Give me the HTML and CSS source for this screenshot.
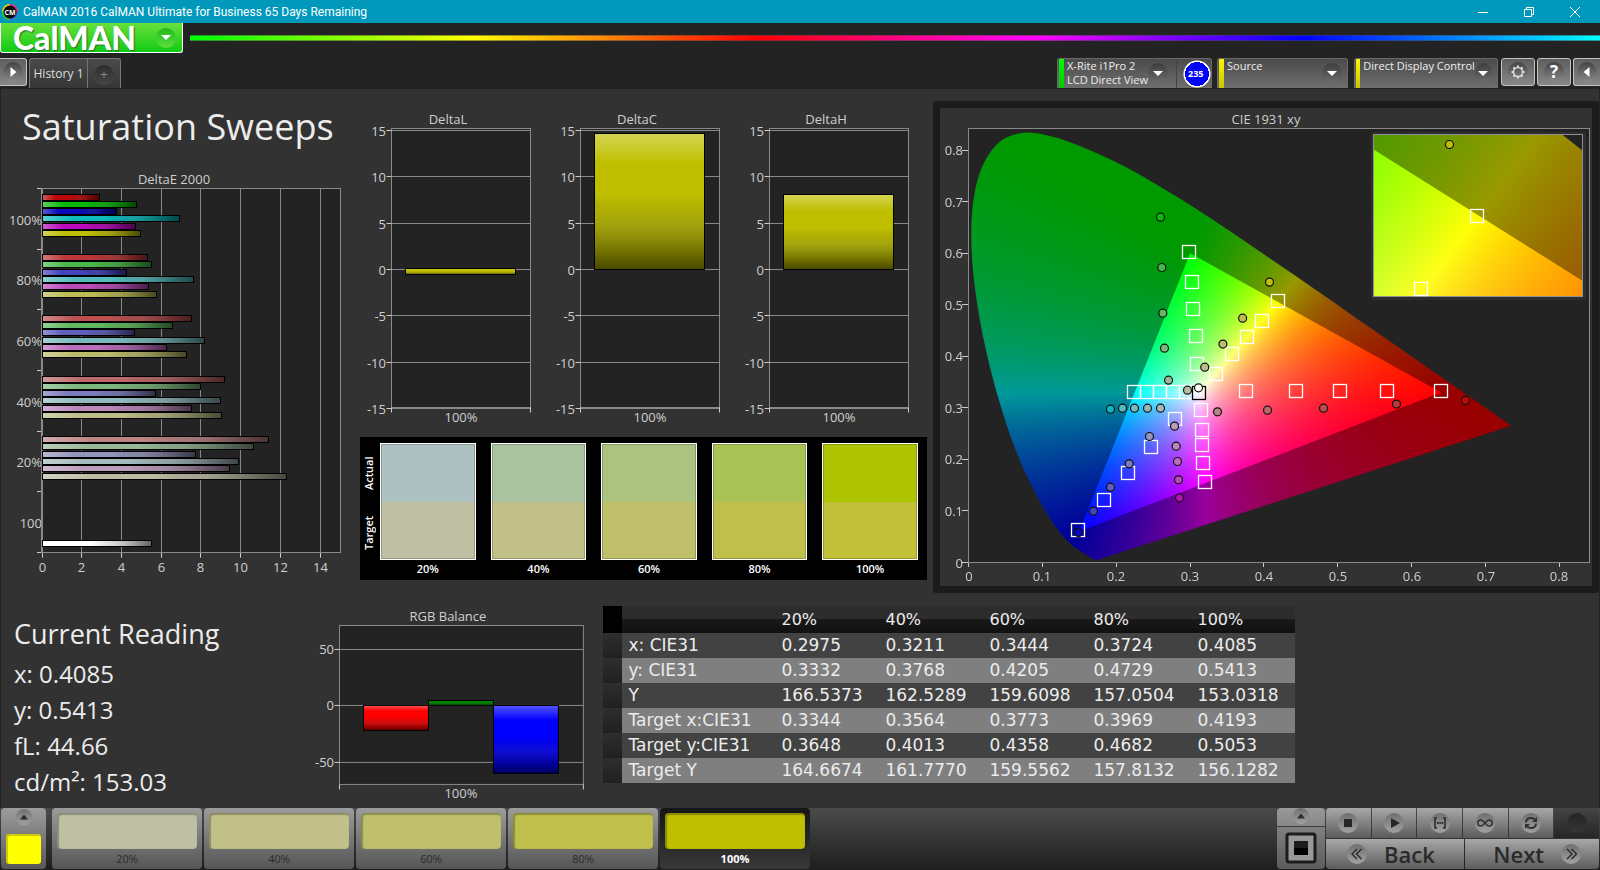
FILE: index.html
```html
<!DOCTYPE html>
<html lang="en">
<head>
<meta charset="utf-8">
<title>CalMAN 2016</title>
<link rel="stylesheet" href="styles.css">
</head>
<body>
<header class="titlebar">
  <svg class="app-icon" viewBox="0 0 16 16" aria-hidden="true">
    <circle cx="8" cy="8" r="8" fill="#e8d018"/>
    <path d="M8 0a8 8 0 0 1 8 8H8z" fill="#e0208c"/><path d="M16 8a8 8 0 0 1-8 8V8z" fill="#2a5cf0"/><path d="M8 16a8 8 0 0 1-8-8h8z" fill="#18c040"/>
    <circle cx="8" cy="8" r="6.500" fill="#0a0a0a"/>
    <text x="8" y="10.500" text-anchor="middle" class="app-icon-text">CM</text>
  </svg>
  <span class="window-title">CalMAN 2016 CalMAN Ultimate for Business 65 Days Remaining</span>
  <div class="window-controls">
    <button class="win-btn" aria-label="Minimize"><svg viewBox="0 0 12 12"><path d="M1 6.500h10"/></svg></button>
    <button class="win-btn" aria-label="Restore"><svg viewBox="0 0 12 12"><path d="M1.500 3.500h7v7h-7zM3.500 3.500v-2h7v7h-2"/></svg></button>
    <button class="win-btn" aria-label="Close"><svg viewBox="0 0 12 12"><path d="M1 1l10 10M11 1L1 11"/></svg></button>
  </div>
</header>

<div class="brand-row">
  <button class="logo"><span>CalMAN</span><i class="logo-arrow"><svg viewBox="0 0 10 6"><path d="M0 0h10L5 5z" fill="#fff"/></svg></i></button>
  <div class="rainbow"></div>
</div>

<div class="toolbar">
  <button class="tool-btn tool-btn-left" aria-label="Expand"><i class="dimple"><svg viewBox="0 0 20 20"><path d="M7.500 5l6 5-6 5z" fill="#fff"/></svg></i></button>
  <nav class="tabs"><button class="tab">History 1</button><button class="tab tab-add" aria-label="Add tab"><i>+</i></button></nav>
  <div class="devices">
    <button class="device device-meter"><b class="strip strip-green"></b><span class="device-name">X-Rite i1Pro 2<br>LCD Direct View</span><i class="drop"><svg viewBox="0 0 10 6"><path d="M0 0h10L5 5z" fill="#fff"/></svg></i><em class="level">235</em></button>
    <button class="device device-source"><b class="strip"></b><span class="device-name">Source</span><i class="drop"><svg viewBox="0 0 10 6"><path d="M0 0h10L5 5z" fill="#fff"/></svg></i></button>
    <button class="device device-display"><b class="strip"></b><span class="device-name">Direct Display Control</span><i class="drop"><svg viewBox="0 0 10 6"><path d="M0 0h10L5 5z" fill="#fff"/></svg></i></button>
    <div class="tool-group">
      <button class="tool-btn" aria-label="Settings"><i class="dimple"><svg viewBox="0 0 20 20"><circle cx="10" cy="10" r="4.500" fill="none" stroke="#ddd" stroke-width="1.500"/><path d="M10 3.500v2M10 14.500v2M3.500 10h2M14.500 10h2M5.400 5.400l1.400 1.400M13.200 13.200l1.400 1.400M5.400 14.600l1.400-1.400M13.200 6.800l1.400-1.400" stroke="#ddd" stroke-width="2"/></svg></i></button>
      <button class="tool-btn" aria-label="Help"><i class="dimple help">?</i></button>
      <button class="tool-btn tool-btn-right" aria-label="Collapse"><i class="dimple"><svg viewBox="0 0 20 20"><path d="M12.500 5l-6 5 6 5z" fill="#fff"/></svg></i></button>
    </div>
  </div>
</div>

<main class="workspace">
  <div class="top-row">
    <section class="col-left">
      <h1>Saturation Sweeps</h1>
      <svg id="delta-e" class="chart" viewBox="0 0 351 420" role="img" aria-label="DeltaE 2000"></svg>
    </section>
    <section class="col-mid">
      <div class="delta-row">
        <svg id="delta-l" class="chart" viewBox="0 0 189 322" role="img" aria-label="DeltaL"></svg>
        <svg id="delta-c" class="chart" viewBox="0 0 189 322" role="img" aria-label="DeltaC"></svg>
        <svg id="delta-h" class="chart" viewBox="0 0 189 322" role="img" aria-label="DeltaH"></svg>
      </div>
      <div class="compare">
        <div class="compare-labels"><span>Actual</span><span>Target</span></div>
        <figure><div class="pair pair-20"></div><figcaption>20%</figcaption></figure>
        <figure><div class="pair pair-40"></div><figcaption>40%</figcaption></figure>
        <figure><div class="pair pair-60"></div><figcaption>60%</figcaption></figure>
        <figure><div class="pair pair-80"></div><figcaption>80%</figcaption></figure>
        <figure><div class="pair pair-100"></div><figcaption>100%</figcaption></figure>
      </div>
    </section>
    <section class="cie">
      <svg id="cie" class="chart" viewBox="0 0 652 478" role="img" aria-label="CIE 1931 xy"></svg>
    </section>
  </div>

  <div class="bottom-row">
    <section class="reading">
      <h2>Current Reading</h2>
      <p>x: 0.4085</p><p>y: 0.5413</p><p>fL: 44.66</p><p>cd/m²: 153.03</p>
    </section>
    <section class="balance"><svg id="rgb" class="chart" viewBox="0 0 270 196" role="img" aria-label="RGB Balance"></svg></section>
    <table class="data">
      <thead><tr><td class="grip"></td><td></td><th>20%</th><th>40%</th><th>60%</th><th>80%</th><th>100%</th></tr></thead>
      <tbody>
        <tr><td class="grip"></td><th>x: CIE31</th><td>0.2975</td><td>0.3211</td><td>0.3444</td><td>0.3724</td><td>0.4085</td></tr>
        <tr><td class="grip"></td><th>y: CIE31</th><td>0.3332</td><td>0.3768</td><td>0.4205</td><td>0.4729</td><td>0.5413</td></tr>
        <tr><td class="grip"></td><th>Y</th><td>166.5373</td><td>162.5289</td><td>159.6098</td><td>157.0504</td><td>153.0318</td></tr>
        <tr><td class="grip"></td><th>Target x:CIE31</th><td>0.3344</td><td>0.3564</td><td>0.3773</td><td>0.3969</td><td>0.4193</td></tr>
        <tr><td class="grip"></td><th>Target y:CIE31</th><td>0.3648</td><td>0.4013</td><td>0.4358</td><td>0.4682</td><td>0.5053</td></tr>
        <tr><td class="grip"></td><th>Target Y</th><td>164.6674</td><td>161.7770</td><td>159.5562</td><td>157.8132</td><td>156.1282</td></tr>
      </tbody>
    </table>
  </div>
</main>

<footer class="dock">
  <button class="current" aria-label="Current pattern"><i class="knob knob-small"><svg viewBox="0 0 16 16"><path d="M4 10.500h8L8 5.500z" fill="#2c2c2c"/></svg></i><b></b></button>
  <div class="patterns">
    <button class="pattern"><i class="c20"></i><span>20%</span></button>
    <button class="pattern"><i class="c40"></i><span>40%</span></button>
    <button class="pattern"><i class="c60"></i><span>60%</span></button>
    <button class="pattern"><i class="c80"></i><span>80%</span></button>
    <button class="pattern pattern-active"><i class="c100"></i><span>100%</span></button>
  </div>
  <div class="window-pick">
    <button class="pick-up" aria-label="Choose pattern window"><i class="knob knob-small"><svg viewBox="0 0 16 16"><path d="M4 10.500h8L8 5.500z" fill="#2c2c2c"/></svg></i></button>
    <button class="pick-box" aria-label="Pattern window"><svg viewBox="0 0 32 32"><rect x="2" y="2" width="28" height="28" rx="2" fill="#999" stroke="#1c1c1c" stroke-width="3"/><rect x="9" y="9" width="14" height="7" fill="#1d1d1d"/><rect x="9" y="16" width="14" height="7" fill="#000"/></svg></button>
  </div>
  <div class="transport">
    <div class="transport-row">
      <button aria-label="Stop"><i class="knob"><svg viewBox="0 0 20 20"><path d="M6 6h8v8H6z" fill="#262626"/></svg></i></button>
      <button aria-label="Play"><i class="knob"><svg viewBox="0 0 20 20"><path d="M7 5l9 5-9 5z" fill="#262626"/></svg></i></button>
      <button aria-label="Step"><i class="knob"><svg viewBox="0 0 20 20"><path d="M7 5H5v10h2M13 5h2v10h-2" fill="none" stroke="#262626" stroke-width="1.500"/><path d="M7 10h1.500M9.300 10h1.500M11.600 10h1.500" stroke="#262626" stroke-width="1.800"/></svg></i></button>
      <button aria-label="Continuous"><i class="knob"><svg viewBox="0 0 20 20"><path d="M10 10C8 7.500 7 7 5.800 7a3 3 0 0 0 0 6C7 13 8 12.500 10 10s3-3 4.200-3a3 3 0 0 1 0 6C13 13 12 12.500 10 10z" fill="none" stroke="#303030" stroke-width="1.500"/></svg></i></button>
      <button aria-label="Refresh"><i class="knob"><svg viewBox="0 0 20 20"><path d="M5 9.500C5 6.500 7.500 5 10 5c2 0 3 .6 4 1.700M15 10.500c0 3-2.500 4.500-5 4.500-2 0-3-.6-4-1.700" fill="none" stroke="#303030" stroke-width="2"/><path d="M16 4v5h-5zM4 16v-5h5z" fill="#303030"/></svg></i></button>
      <button class="off" aria-label="Record" disabled><i class="knob"></i></button>
    </div>
    <div class="transport-row">
      <button class="step"><i class="knob"><svg viewBox="0 0 20 20"><path d="M10 5l-5 5 5 5M14.500 5l-5 5 5 5" fill="none" stroke="#2a2a2a" stroke-width="1.400"/></svg></i><span>Back</span></button>
      <button class="step step-next"><span>Next</span><i class="knob"><svg viewBox="0 0 20 20"><path d="M6 5l5 5-5 5M10.500 5l5 5-5 5" fill="none" stroke="#2a2a2a" stroke-width="1.400"/></svg></i></button>
    </div>
  </div>
</footer>
<script src="charts.js"></script>
</body>
</html>
```
FILE: styles.css
```css
* { box-sizing: border-box; }
body {
  margin: 0;
  min-height: 100vh;
  display: flex;
  flex-direction: column;
  background: #232323;
  color: #ececec;
  font-family: "Open Sans", "Noto Sans", sans-serif;
}
button { font: inherit; color: inherit; border: 0; padding: 0; margin: 0; background: none; text-align: left; }
i, em { font-style: normal; }
svg { display: block; }

.titlebar { display: flex; align-items: center; height: 23px; padding-left: 2px; background: #0099bc; }
.app-icon { width: 16px; height: 16px; }
.app-icon-text { font: bold 7px "Open Sans", sans-serif; fill: #fff; }
.window-title { margin-left: 5px; font-family: Roboto, sans-serif; font-size: 12px; color: #fff; flex: 1; }
.window-controls { display: flex; padding-right: 2px; }
.win-btn { width: 46px; height: 23px; display: flex; align-items: center; justify-content: center; }
.win-btn svg { width: 12px; height: 12px; fill: none; stroke: #fff; stroke-width: 1; }

.brand-row { display: flex; align-items: flex-start; gap: 7px; height: 35px; }
.logo {
  display: flex; align-items: center; justify-content: space-between;
  width: 183px; height: 30px; padding: 0 6px 0 12px;
  border: 1px solid #fff; border-top: 0; border-radius: 0 0 3px 3px;
  background: linear-gradient(#67e03c, #12cb12);
  font: 900 32px/28px Lato, sans-serif; color: #fff; text-shadow: 1px 1px 1px #2c6a2c;
}
.logo-arrow { width: 20px; height: 20px; border-radius: 50%; background: linear-gradient(#22b81c, #5ce040); display: flex; align-items: center; justify-content: center; }
.logo-arrow svg { width: 10px; height: 6px; }
.rainbow {
  flex: 1; height: 6px; margin-top: 12px;
  border-top: 1px solid #4448; border-bottom: 1px solid #4448;
  background: linear-gradient(90deg, #0f0, #ff0 20%, #f00 40%, #f0f 60%, #00f 79%, #0ff);
}

.toolbar { display: flex; height: 31px; align-items: flex-start; }
.tool-btn {
  width: 34px; height: 28px; border: 1px solid #c4c4c4; border-radius: 3px;
  background: linear-gradient(#5e5e5e, #878787);
  display: flex; align-items: center; justify-content: center;
}
.tool-btn-left { width: 27px; border-left: 0; border-radius: 0 3px 3px 0; }
.tool-btn-right { width: 27px; border-right: 0; border-radius: 3px 0 0 3px; }
.dimple { width: 20px; height: 20px; border-radius: 50%; background: linear-gradient(#444, #8a8a8a); display: flex; align-items: center; justify-content: center; }
.dimple svg { width: 20px; height: 20px; }
.help { font: bold 17px/20px "Open Sans", sans-serif; color: #fff; }
.tabs { display: flex; margin-left: 2px; border: 1px solid #777; border-bottom: 0; border-radius: 3px 3px 0 0; background: linear-gradient(#4a4a4a, #363636); height: 30px; }
.tab { width: 57px; text-align: center; font-size: 12px; color: #ddd; }
.tab-add { width: 33px; border-left: 1px solid #777; color: #8a8a8a; display: flex; align-items: center; justify-content: center; }
.tab-add i { width: 20px; height: 20px; line-height: 19px; border-radius: 50%; background: linear-gradient(#2d2d2d, #484848); font-size: 13px; margin-top: 3px; }
.devices { display: flex; gap: 5px; margin-left: auto; }
.device {
  display: flex; height: 30px; padding-left: 1px; overflow: hidden;
  border: 1px solid #6a6a6a; border-bottom: 0; border-radius: 3px 3px 0 0;
  background: linear-gradient(#4b4b4b, #6e6e6e); color: #eee;
}
.device-meter { width: 155px; }
.device-source { width: 131px; }
.device-display { width: 144px; margin-left: 1px; }
.strip { width: 5px; background: linear-gradient(#fff600, #c8c400); }
.strip-green { background: linear-gradient(#0f0, #00c800); }
.device-name { flex: 1; padding-left: 3px; font-size: 11px; line-height: 14px; white-space: nowrap; }
.drop { width: 20px; height: 20px; margin: 4px 5px 0 0; border-radius: 50%; background: linear-gradient(#3e3e3e, #6c6c6c); display: flex; align-items: center; justify-content: center; }
.drop svg { width: 10px; height: 6px; margin-top: 2px; }
.device-meter .drop { margin-right: 8px; }
.level {
  width: 35px; margin-top: 1px; padding-left: 11px; border-left: 1px solid #444; color: #fff;
  background: radial-gradient(circle at 20px 14px, #00f 12px, #fff 12px, #fff 13px, transparent 14px);
  font: bold 9px/27px "Open Sans", sans-serif;
}
.tool-group { display: flex; gap: 2px; margin-left: -2px; }

.workspace { flex: 1; margin: 0 1px; background: #323232; padding-top: 12px; }
.top-row { display: grid; grid-template-columns: minmax(0, 351fr) minmax(0, 569fr) minmax(0, 666fr); align-items: start; gap: 6px; }
.col-mid { padding-top: 7px; }
.cie { border: 7px solid #1b1b1b; border-radius: 3px; }
h1 { margin: 0; padding: 0 0 0 21px; font-size: 36px; font-weight: 400; line-height: 52px; height: 66px; white-space: nowrap; }
.chart { width: 100%; height: auto; overflow: visible; }
.chart text { font-family: "Open Sans", "Noto Sans", sans-serif; font-size: 13px; fill: #cfcfcf; }
.delta-row { display: flex; padding-right: 8px; margin-left: -6px; }
.delta-row .chart { flex: 1; min-width: 0; }
.compare { display: flex; gap: 15px; margin-left: 2px; margin-top: 7px; padding: 6px 9px 0 0; height: 143px; background: #000; color: #fff; font-size: 11px; }
.compare-labels { width: 20px; margin-right: -15px; display: flex; flex-direction: column; }
.compare-labels span { writing-mode: vertical-rl; transform: rotate(180deg); height: 60px; line-height: 17px; text-align: center; font-weight: 600; }
.compare figure { margin: 0; flex: 1; }
.compare figcaption { text-align: center; line-height: 18px; font-weight: 600; }
.pair { height: 117px; border: 1px solid #fff; box-shadow: inset 0 0 0 1px #0003; }
.pair-20 { background: linear-gradient(#adc2c0 50%, #bfbfa4 50%); }
.pair-40 { background: linear-gradient(#aac3a0 50%, #c0c088 50%); }
.pair-60 { background: linear-gradient(#abc37f 50%, #bfbf6c 50%); }
.pair-80 { background: linear-gradient(#abc356 50%, #bfbf4b 50%); }
.pair-100 { background: linear-gradient(#aec400 50%, #c2c039 50%); }

.bottom-row { display: flex; align-items: flex-start; }
.reading { width: 20%; padding: 23px 0 0 13px; white-space: nowrap; }
h2 { margin: 0 0 4px; font-size: 27px; font-weight: 400; line-height: 36px; }
.reading p { margin: 0; font-size: 24px; line-height: 36px; }
.balance { flex: 270; padding-top: 12px; }
.data { flex: none; width: 43.3%; margin: 13px 19% 0 13px; border-collapse: collapse; table-layout: fixed; font: 17px/24px "DejaVu Sans", sans-serif; }
.data th, .data td { width: 104px; padding: 0; height: 25px; font-weight: 400; text-align: left; line-height: 25px; white-space: nowrap; }
.data .grip { width: 19px; background: linear-gradient(#2e2e2e, #202020); }
.data th:nth-child(2), .data thead td:nth-child(2) { width: 159px; padding-left: 6px; }
.data thead tr { background: linear-gradient(#2c2c2c 48%, #191919 50%, #101010); }
.data thead th:last-child { width: auto; }
.data thead th, .data thead td { height: 27px; font-size: 16px; }
.data thead .grip { background: #000; }
.data tbody tr { background: #424242; }
.data tbody tr:nth-child(even) { background: #7f7f7f; }

.dock { display: flex; height: 62px; padding-left: 1px; padding-right: 1px; background: linear-gradient(#4a4a4a, #1e1e1e); }
.current { width: 45px; height: 61px; border-radius: 4px; background: linear-gradient(#9c9c9c, #585858); display: flex; flex-direction: column; align-items: center; justify-content: space-between; padding: 1px 0 5px; }
.current b { width: 35px; height: 30px; border-radius: 3px; background: #ff0; box-shadow: inset 1px 1px 0 1px #0003; }
.knob { width: 20px; height: 20px; border-radius: 50%; background: linear-gradient(#6f6f6f, #a2a2a2); display: flex; }
.knob svg { width: 100%; height: 100%; }
.knob-small { width: 16px; height: 16px; }
.patterns { display: flex; gap: 2px; margin-left: 6px; }
.pattern { width: 150px; height: 61px; padding: 5px 5px 0; border-radius: 4px; background: linear-gradient(#9c9c9c, #555); display: flex; flex-direction: column; font-size: 11px; color: #2a2a2a; }
.pattern i { height: 36px; border-radius: 4px; box-shadow: inset 1px 1px 1px 1px #0004; }
.pattern span { line-height: 20px; text-align: center; }
.pattern-active { background: linear-gradient(#161616, #383838); color: #fff; font-weight: 700; }
.c20 { background: #bfbfa4; } .c40 { background: #c0c088; } .c60 { background: #bfbf6c; } .c80 { background: #bfbf4b; } .c100 { background: #bfbf00; }
.window-pick { margin-left: auto; width: 48px; display: flex; flex-direction: column; gap: 1px; }
.pick-up { height: 18px; border-radius: 4px 4px 0 0; background: linear-gradient(#9a9a9a, #868686); display: flex; justify-content: center; }
.pick-box { height: 42px; border-radius: 0 0 4px 4px; background: linear-gradient(#808080, #5c5c5c); display: flex; align-items: center; justify-content: center; }
.pick-box svg { width: 32px; height: 32px; }
.transport { width: 273px; margin-left: 1px; display: flex; flex-direction: column; gap: 1px; border-radius: 4px; height: 61px; overflow: hidden; }
.transport-row { display: flex; gap: 1px; flex: 1; }
.transport-row button { flex: 1; background: linear-gradient(#a8a8a8, #5c5c5c); display: flex; align-items: center; justify-content: center; }
.transport-row .off { background: linear-gradient(#444, #262626); }
.off .knob { background: linear-gradient(#242424, #363636); }
.transport-row .step { gap: 17px; justify-content: flex-start; padding-left: 21px; color: #2a2a2a; font-size: 22px; font-weight: 600; line-height: 28px; }
.transport-row .step-next { justify-content: flex-end; padding: 0 18px 0 0; }
```
FILE: charts.js
```js
const NS = 'http://www.w3.org/2000/svg';

function add(parent, tag, attrs, text) {
  const node = document.createElementNS(NS, tag);
  for (const k in attrs) node.setAttribute(k, attrs[k]);
  if (text !== undefined) node.textContent = text;
  parent.appendChild(node);
  return node;
}

const snap = v => Math.floor(v) + 0.5;
const line = (s, x1, y1, x2, y2, color) => add(s, 'path', { d: `M${x1} ${y1}L${x2} ${y2}`, stroke: color || '#8a8a8a', fill: 'none' });
const label = (s, x, y, text, anchor) => add(s, 'text', { x, y, 'text-anchor': anchor || 'middle' }, text);

function shade(svg, id, horizontal) {
  const g = add(add(svg, 'defs', {}), 'linearGradient', { id, x1: 0, y1: 0, x2: horizontal ? 1 : 0, y2: horizontal ? 0 : 1 });
  [[0, '#fff', 0.33], [0.22, '#fff', 0], [0.45, '#000', 0], [0.65, '#444', 0.2], [0.85, '#000', 0.38], [1, '#000', 0.62]]
    .forEach(([o, c, a]) => add(g, 'stop', { offset: o, 'stop-color': c, 'stop-opacity': a }));
}

function bar(svg, x, y, w, h, color, id) {
  add(svg, 'rect', { x, y, width: w, height: h, fill: color });
  add(svg, 'rect', { x, y, width: w, height: h, fill: `url(#${id})`, stroke: '#000' });
}

/* Saturated colours per level: red, green, blue, cyan, magenta, yellow */
const palette = {
  100: ['#bc0a0a', '#0aba0a', '#0a0abc', '#0ababc', '#bc0abc', '#bebe08'],
  80: ['#bc3838', '#48b848', '#4444bc', '#54babc', '#bc4cbc', '#bcbc50'],
  60: ['#bc5050', '#60b860', '#6060bc', '#78babc', '#bc6cbc', '#bcbc6c'],
  40: ['#bc6868', '#7cb87c', '#7c7cbc', '#90babc', '#bc88bc', '#bcbc88'],
  20: ['#bc8484', '#98b898', '#9494bc', '#a4babc', '#bc9cbc', '#bcbca4']
};

function deltaE() {
  const s = document.getElementById('delta-e');
  const x0 = 41, y0 = 21.5, y1 = 385.5, unit = 19.86, right = 339.5;
  shade(s, 'shade-e', true);
  label(s, 173, 17, 'DeltaE 2000');
  add(s, 'rect', { x: x0, y: y0, width: right - x0, height: y1 - y0, fill: '#232323' });
  for (let v = 0; v <= 14; v += 2) {
    const x = snap(x0 + v * unit);
    line(s, x, y0, x, y1 + 5);
    line(s, x, y1, x, y1 + 5, '#ccc');
    label(s, x, 405, v);
  }
  const rows = [
    ['100%', 100, [2.86, 4.72, 3.72, 6.9, 4.67, 4.92]],
    ['80%', 80, [5.28, 5.48, 4.22, 7.59, 5.33, 5.73]],
    ['60%', 60, [7.49, 6.54, 4.62, 8.15, 6.23, 7.24]],
    ['40%', 40, [9.15, 7.94, 5.68, 8.95, 7.49, 9.0]],
    ['20%', 20, [11.37, 10.61, 7.69, 9.86, 9.4, 12.27]],
    ['100', 0, []]
  ];
  const step = (y1 - y0) / 6;
  rows.forEach(([name, level, values], i) => {
    const top = y0 + i * step;
    line(s, x0 - 5, snap(top), x0, snap(top), '#ccc');
    values.forEach((v, k) => bar(s, x0 + 0.5, snap(top + 5.5 + k * 7.3), Math.round(v * unit), 6, palette[level][k], 'shade-e'));
    label(s, x0, Math.round(top + step / 2 + 6), name, 'end');
  });
  line(s, x0 - 5, y1, x0, y1, '#ccc');
  bar(s, x0 + 0.5, snap(y0 + 5 * step + 49), 109, 6, '#ffffff', 'shade-e');
  add(s, 'rect', { x: x0 - 0.5, y: y0, width: right - x0 + 0.5, height: y1 - y0, fill: 'none', stroke: '#8a8a8a' });
}

function delta(id, title, value) {
  const s = document.getElementById(id);
  const x0 = 39.5, x1 = 178.5, top = 20.5, bottom = 299.5, zero = 161.5;
  const unit = 9.27;
  shade(s, 'shade-' + id);
  label(s, 96, 16, title);
  add(s, 'rect', { x: x0, y: top, width: x1 - x0, height: bottom - top, fill: '#232323', stroke: '#8a8a8a' });
  for (let v = 15; v >= -15; v -= 5) {
    const y = snap(zero - v * unit);
    line(s, x0, y, x1, y);
    line(s, x0 - 5, y, x0, y, '#ccc');
    label(s, 34, y + 5, v, 'end');
  }
  line(s, x0, bottom, x0, bottom + 5, '#ccc');
  line(s, x1, bottom, x1, bottom + 5, '#ccc');
  const h = Math.max(Math.round(Math.abs(value) * unit), 6);
  bar(s, x0 + 14, value > 0 ? zero - h : zero - 1, 110, h, '#bfbf00', 'shade-' + id);
  label(s, 109, 314, '100%');
}

function rgb() {
  const s = document.getElementById('rgb');
  const x0 = 18.5, x1 = 262.5, top = 20.5, bottom = 179.5, zero = 100.5;
  shade(s, 'shade-rgb');
  label(s, 127, 16, 'RGB Balance');
  add(s, 'rect', { x: x0, y: top, width: x1 - x0, height: bottom - top, fill: '#232323', stroke: '#8a8a8a' });
  [50, 0, -50].forEach(v => {
    const y = snap(zero - v * 1.13);
    line(s, x0, y, x1, y);
    line(s, x0 - 5, y, x0, y, '#ccc');
    label(s, 13, y + 5, v, 'end');
  });
  line(s, x0, bottom, x0, bottom + 5, '#ccc');
  line(s, x1, bottom, x1, bottom + 5, '#ccc');
  bar(s, x0 + 24, zero, 65, 25, '#ff0000', 'shade-rgb');
  bar(s, x0 + 89, zero - 5, 65, 5, '#008000', 'shade-rgb');
  bar(s, x0 + 154, zero, 65, 68, '#0000ff', 'shade-rgb');
  label(s, 140, 193, '100%');
}

const locus = [
  [.1741, .005], [.1733, .0048], [.1714, .0051], [.1689, .0069], [.1644, .0109], [.1566, .0177], [.144, .0297], [.1355, .0399],
  [.1241, .0578], [.1096, .0868], [.0913, .1327], [.0687, .2007], [.0454, .295], [.0235, .4127], [.0082, .5384], [.0039, .6548],
  [.0139, .7502], [.0389, .812], [.0743, .8338], [.1142, .8262], [.1547, .8059], [.1929, .7816], [.2296, .7543], [.3016, .6923],
  [.3731, .6245], [.4441, .5547], [.5125, .4866], [.5752, .4242], [.627, .3725], [.6658, .334], [.6915, .3083], [.719, .2809], [.7347, .2653]
];

/* Paints the chromaticity diagram; view gives canvas size and the xy mapping. */
function paintGamut(svg, view) {
  const fo = add(svg, 'foreignObject', { x: view.left, y: view.top, width: view.w, height: view.h });
  const canvas = document.createElement('canvas');
  canvas.className = 'gamut';
  canvas.width = view.w;
  canvas.height = view.h;
  fo.appendChild(canvas);
  const ctx = canvas.getContext('2d');
  const px = (x, y) => [(x - view.x0) * view.sx, (view.y0 - y) * view.sy];

  function layer(level) {
    const c = document.createElement('canvas');
    c.width = view.w;
    c.height = view.h;
    const cx = c.getContext('2d');
    const img = cx.createImageData(view.w, view.h);
    for (let j = 0; j < view.h; j++) {
      for (let i = 0; i < view.w; i++) {
        const x = view.x0 + (i + 0.5) / view.sx;
        const y = Math.max(view.y0 - (j + 0.5) / view.sy, 0.0001);
        const z = 1 - x - y;
        const r = Math.max(3.2406 * x - 1.5372 * y - 0.4986 * z, 0);
        const g = Math.max(-0.9689 * x + 1.8758 * y + 0.0415 * z, 0);
        const b = Math.max(0.0557 * x - 0.204 * y + 1.057 * z, 0);
        const m = level / Math.max(r, g, b);
        const o = (j * view.w + i) * 4;
        img.data[o] = r * m;
        img.data[o + 1] = g * m;
        img.data[o + 2] = b * m;
        img.data[o + 3] = 255;
      }
    }
    cx.putImageData(img, 0, 0);
    return c;
  }

  function tracePath(points, smooth) {
    ctx.beginPath();
    const p = points.map(q => px(q[0], q[1]));
    ctx.moveTo(p[0][0], p[0][1]);
    for (let i = 1; i < p.length; i++) {
      if (!smooth) { ctx.lineTo(p[i][0], p[i][1]); continue; }
      const a = p[Math.max(i - 2, 0)], b = p[i - 1], c = p[i], d = p[Math.min(i + 1, p.length - 1)];
      ctx.bezierCurveTo(b[0] + (c[0] - a[0]) / 6, b[1] + (c[1] - a[1]) / 6, c[0] - (d[0] - b[0]) / 6, c[1] - (d[1] - b[1]) / 6, c[0], c[1]);
    }
    ctx.closePath();
  }

  ctx.fillStyle = '#232323';
  ctx.fillRect(0, 0, view.w, view.h);
  [[locus, true, 153], [[[.64, .33], [.3, .6], [.15, .06]], false, 255]].forEach(([pts, smooth, level]) => {
    ctx.save();
    tracePath(pts, smooth);
    ctx.clip();
    ctx.drawImage(layer(level), 0, 0);
    ctx.restore();
  });
}

const levels = [20, 40, 60, 80, 100];
const targets = [
  [[.3763, .332], [.4436, .332], [.5032, .332], [.5668, .332], [.64, .332]],
  [[.3096, .3855], [.3073, .44], [.3042, .491], [.3019, .544], [.2987, .602]],
  [[.2789, .2775], [.2473, .2232], [.2162, .1727], [.1837, .121], [.1485, .0627]],
  [[.2947, .33], [.2775, .33], [.2595, .33], [.2419, .33], [.2243, .33]],
  [[.315, .295], [.3163, .2574], [.3163, .2283], [.3181, .194], [.3195, .1559]],
  [[.3344, .3665], [.3564, .4045], [.3773, .437], [.3969, .469], [.4193, .507]]
];
const readings = [
  [[.3371, .2924], [.4048, .2956], [.4806, .2995], [.5794, .3073], [.6728, .3144]],
  [[.2708, .3538], [.2653, .4159], [.2631, .4838], [.2617, .5724], [.2599, .6701]],
  [[.245, .2445], [.2175, .1915], [.1922, .1462], [.1692, .0996], [.1489, .0582]],
  [[.2599, .2995], [.2423, .2995], [.2247, .2995], [.2085, .2995], [.1922, .2975]],
  [[.2789, .2646], [.2811, .2257], [.2829, .196], [.2843, .1604], [.2857, .1255]],
  [[.2965, .3344], [.3198, .379], [.3444, .4238], [.3711, .4741], [.4075, .544]]
];

function square(s, x, y, color) {
  add(s, 'rect', { x: snap(x - 6.5), y: snap(y - 6.5), width: 13, height: 13, fill: 'none', stroke: color || '#fff', 'stroke-width': 1.3 });
}
function dot(s, x, y, fill) {
  add(s, 'circle', { cx: x, cy: y, r: 4, fill, stroke: '#111', 'stroke-width': 1.2 });
}

function cie() {
  const s = document.getElementById('cie');
  const sx = 738.7, sy = 515.4, x0 = 28.5, y0 = 454.5;
  const X = v => x0 + v * sx, Y = v => y0 - v * sy;
  label(s, 326, 16, 'CIE 1931 xy');
  paintGamut(s, { left: 28, top: 20, w: 622, h: 435, x0: -0.5 / sx, y0: 434.5 / sy, sx, sy });
  add(s, 'rect', { x: 28.5, y: 20.5, width: 621, height: 434, fill: 'none', stroke: '#8a8a8a' });
  for (let i = 0; i <= 8; i++) {
    const v = i ? '0.' + i : '0';
    line(s, snap(X(i / 10)), 455, snap(X(i / 10)), 459, '#ccc');
    line(s, 22, snap(Y(i / 10)), 28, snap(Y(i / 10)), '#ccc');
    label(s, Math.round(X(i / 10)), 473, v);
    label(s, 23, Math.round(Y(i / 10)) + 5, v, 'end');
  }
  targets.forEach(set => set.forEach(([x, y]) => square(s, X(x), Y(y))));
  square(s, X(.3127), Y(.329), '#000');
  readings.forEach((set, hue) => set.forEach(([x, y], k) => dot(s, X(x), Y(y), palette[levels[k]][hue])));
  dot(s, X(.3114), Y(.339), '#fff');

  const ix = 2500, iy = 1980;
  add(s, 'rect', { x: 431, y: 24, width: 215, height: 168, fill: '#2e2e2e' });
  paintGamut(s, { left: 434, top: 26, w: 208, h: 162, x0: .4193 - 104 / ix, y0: .5053 + 81 / iy, sx: ix, sy: iy });
  add(s, 'rect', { x: 433.5, y: 26.5, width: 209, height: 162, fill: 'none', stroke: '#8f8f8f' });
  square(s, 537, 108);
  square(s, 481, 181);
  dot(s, 509.5, 36.5, '#bfbf00');
}

deltaE();
delta('delta-l', 'DeltaL', -0.6);
delta('delta-c', 'DeltaC', 14.7);
delta('delta-h', 'DeltaH', 8.05);
rgb();
cie();
```
